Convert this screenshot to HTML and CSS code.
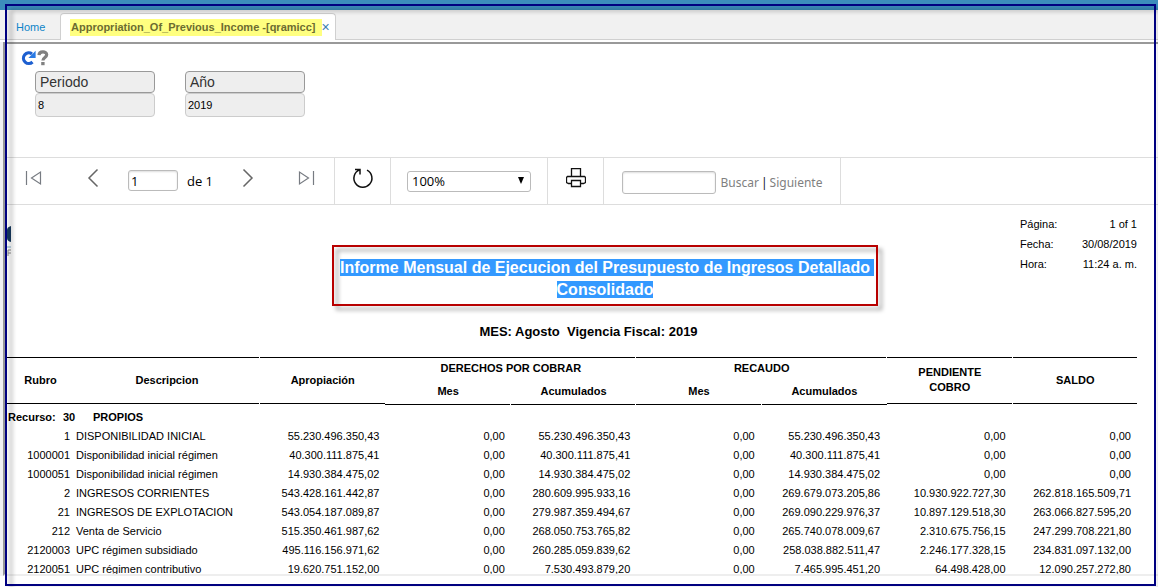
FILE: index.html
```html
<!DOCTYPE html>
<html lang="es">
<head>
<meta charset="utf-8">
<title>Appropriation_Of_Previous_Income</title>
<link rel="stylesheet" href="styles.css">
</head>
<body>
<div class="topbar"></div>
<nav class="tabs">
  <a class="tab" href="#home">Home</a>
  <div class="tab tab-active">
    <a class="tab-title" href="#report">Appropriation_Of_Previous_Income -[qramicc]</a>
    <button class="tab-close" type="button" aria-label="Cerrar">×</button>
  </div>
</nav>
<main class="panel">
  <section class="params">
    <div class="actions">
      <button class="icon-btn" type="button" aria-label="Actualizar">
        <svg width="16" height="16" viewBox="0 0 16 16"><path d="M12 4A5.300 5.300 0 1 0 12.500 12" fill="none" stroke="#1d5fd0" stroke-width="3.200"/><path d="M15.600 .8v7.200H8.400z" fill="#2a7ae4"/></svg>
      </button>
      <button class="icon-btn" type="button" aria-label="Ayuda">
        <svg width="12" height="16" viewBox="0 0 12 16"><path d="M2 5.200C2.200 1 9.700 .9 9.700 4.800c0 2.700-3.800 2.600-3.800 5.700" fill="none" stroke="#808080" stroke-width="3.200"/><path d="M4.200 12h3.400v3.200H4.200z" fill="#808080"/></svg>
      </button>
    </div>
    <div class="fields">
      <div class="field">
        <label for="periodo">Periodo</label>
        <input id="periodo" type="text" value="8" readonly>
      </div>
      <div class="field">
        <label for="anio">Año</label>
        <input id="anio" type="text" value="2019" readonly>
      </div>
    </div>
  </section>

  <div class="toolbar">
    <div class="group group-nav">
      <button class="icon-btn" type="button" aria-label="Primera página">
        <svg width="18" height="18" viewBox="0 0 18 18" fill="none" stroke="#777b82"><path d="M1.500 2v14M15.500 3v12L6.500 9z" stroke-width="1.200"/></svg>
      </button>
      <div class="nav-mid">
        <button class="icon-btn" type="button" aria-label="Página anterior">
          <svg width="12" height="20" viewBox="0 0 12 20" fill="none" stroke="#666"><path d="M10.500 1.500 2 10l8.500 8.500" stroke-width="1.500"/></svg>
        </button>
        <div class="pager">
          <input class="box page-box" type="text" value="1" aria-label="Página actual">
          <span>de 1</span>
        </div>
        <button class="icon-btn" type="button" aria-label="Página siguiente">
          <svg width="12" height="20" viewBox="0 0 12 20" fill="none" stroke="#666"><path d="M1.500 1.500 10 10l-8.500 8.500" stroke-width="1.500"/></svg>
        </button>
      </div>
      <button class="icon-btn" type="button" aria-label="Última página">
        <svg width="18" height="18" viewBox="0 0 18 18" fill="none" stroke="#777b82"><path d="M15.500 2v14M1.500 3v12l9-6z" stroke-width="1.200"/></svg>
      </button>
    </div>
    <div class="group">
      <button class="icon-btn" type="button" aria-label="Recargar">
        <svg width="22" height="22" viewBox="0 0 22 22" fill="none" stroke="#111" stroke-width="1.500"><path d="M15 3.200A9 9 0 1 1 7.500 2.900M3 2.500h5v5"/></svg>
      </button>
    </div>
    <div class="group group-zoom">
      <div class="select">
        <select class="box" aria-label="Zoom"><option>100%</option></select>
        <svg class="caret" width="6" height="7" viewBox="0 0 6 7"><path d="M0 0h6L3 7z"/></svg>
      </div>
    </div>
    <div class="group">
      <button class="icon-btn" type="button" aria-label="Imprimir">
        <svg width="20" height="20" viewBox="0 0 20 20" fill="none" stroke="#111" stroke-width="1.300"><path d="M5.500 8.500v-8h9v8M5.500 15.500h-3l-2-1v-5l1-1h17l1 1v5l-2 1h-3M5.500 12.500h9v6h-9z"/></svg>
      </button>
    </div>
    <div class="group group-find">
      <input class="box find-box" type="text" aria-label="Buscar en el informe">
      <a href="#find">Buscar</a><span class="bar">|</span><a href="#next">Siguiente</a>
    </div>
  </div>

  <article class="report">
    <svg class="logo" width="4" height="30" viewBox="0 0 4 30"><path d="M4 0Q0 1 0 4v8q0 3 4 4z" fill="#16395f"/><path d="M0 21h4" stroke="#7db0cc"/><path d="M1 30v-6h3M1 27h3" fill="none" stroke="#888"/></svg>
    <header class="report-head">
      <h1><span class="hl hl-first">Informe Mensual de Ejecucion del Presupuesto de Ingresos Detallado</span><br><span class="hl">Consolidado</span></h1>
      <dl class="meta">
        <dt>Página:</dt><dd>1 of 1</dd>
        <dt>Fecha:</dt><dd>30/08/2019</dd>
        <dt>Hora:</dt><dd>11:24 a. m.</dd>
      </dl>
    </header>
    <h2>MES: Agosto&nbsp; Vigencia Fiscal: 2019</h2>
    <table>
      <colgroup><col class="c-code"><col class="c-desc"><col><col><col><col><col><col><col></colgroup>
      <thead>
        <tr>
          <th class="line join" rowspan="2">Rubro</th>
          <th class="line" rowspan="2">Descripcion</th>
          <th class="line join" rowspan="2">Apropiación</th>
          <th class="top" colspan="2">DERECHOS POR COBRAR</th>
          <th class="top" colspan="2">RECAUDO</th>
          <th class="line" rowspan="2">PENDIENTE<br>COBRO</th>
          <th class="line" rowspan="2">SALDO</th>
        </tr>
        <tr>
          <th class="bottom">Mes</th>
          <th class="bottom">Acumulados</th>
          <th class="bottom">Mes</th>
          <th class="bottom join">Acumulados</th>
        </tr>
      </thead>
      <tbody>
        <tr class="section"><th colspan="9"><div class="source"><span>Recurso:</span><span>30</span><span>PROPIOS</span></div></th></tr>
        <tr><td>1</td><td>DISPONIBILIDAD INICIAL</td><td>55.230.496.350,43</td><td>0,00</td><td>55.230.496.350,43</td><td>0,00</td><td>55.230.496.350,43</td><td>0,00</td><td>0,00</td></tr>
        <tr><td>1000001</td><td>Disponibilidad inicial régimen</td><td>40.300.111.875,41</td><td>0,00</td><td>40.300.111.875,41</td><td>0,00</td><td>40.300.111.875,41</td><td>0,00</td><td>0,00</td></tr>
        <tr><td>1000051</td><td>Disponibilidad inicial régimen</td><td>14.930.384.475,02</td><td>0,00</td><td>14.930.384.475,02</td><td>0,00</td><td>14.930.384.475,02</td><td>0,00</td><td>0,00</td></tr>
        <tr><td>2</td><td>INGRESOS CORRIENTES</td><td>543.428.161.442,87</td><td>0,00</td><td>280.609.995.933,16</td><td>0,00</td><td>269.679.073.205,86</td><td>10.930.922.727,30</td><td>262.818.165.509,71</td></tr>
        <tr><td>21</td><td>INGRESOS DE EXPLOTACION</td><td>543.054.187.089,87</td><td>0,00</td><td>279.987.359.494,67</td><td>0,00</td><td>269.090.229.976,37</td><td>10.897.129.518,30</td><td>263.066.827.595,20</td></tr>
        <tr><td>212</td><td>Venta de Servicio</td><td>515.350.461.987,62</td><td>0,00</td><td>268.050.753.765,82</td><td>0,00</td><td>265.740.078.009,67</td><td>2.310.675.756,15</td><td>247.299.708.221,80</td></tr>
        <tr><td>2120003</td><td>UPC régimen subsidiado</td><td>495.116.156.971,62</td><td>0,00</td><td>260.285.059.839,62</td><td>0,00</td><td>258.038.882.511,47</td><td>2.246.177.328,15</td><td>234.831.097.132,00</td></tr>
        <tr><td>2120051</td><td>UPC régimen contributivo</td><td>19.620.751.152,00</td><td>0,00</td><td>7.530.493.879,20</td><td>0,00</td><td>7.465.995.451,20</td><td>64.498.428,00</td><td>12.090.257.272,80</td></tr>
      </tbody>
    </table>
  </article>
</main>
<div class="frame"></div>
</body>
</html>
```

FILE: styles.css
```css
* { box-sizing: border-box; }

body {
  margin: 0;
  height: 100vh;
  display: flex;
  flex-direction: column;
  overflow: hidden;
  padding-bottom: 11px;
  background: #fff;
  color: #000;
  font-family: "Liberation Sans", Arial, sans-serif;
  font-size: 11px;
}

a { color: inherit; text-decoration: none; }
input, select, button { font: inherit; color: inherit; }

.topbar { flex: none; height: 10px; background: #3c8dbc; }

/* Tabs */
.tabs {
  flex: none;
  display: flex;
  align-items: flex-end;
  height: 30px;
  background: #f1f1f1;
  border-bottom: 1px solid #d0d0d0;
}
.tab {
  display: flex;
  align-items: center;
  height: 25px;
  padding-left: 16px;
  width: 60px;
  color: #0e84c8;
}
.tab-active {
  width: auto;
  height: 27px;
  margin-bottom: -1px;
  padding: 0 5px 0 9px;
  background: #fff;
  border: 1px solid #d0d0d0;
  border-bottom: 0;
  border-radius: 4px 4px 0 0;
}
.tab-title {
  padding: 0 6px 0 1px;
  line-height: 17px;
  background: #ffff80;
  color: #6c6c30;
  font-weight: bold;
}
.tab-close {
  height: 20px;
  padding: 0;
  border: 0;
  background: none;
  color: #3b7fb0;
  font-size: 14px;
  line-height: 16px;
}

/* Panel */
.panel {
  flex: 1;
  min-height: 0;
  margin: 2px 0 0 3px;
  overflow: hidden;
  border: solid #999;
  border-width: 2px 0 2px 2px;
  border-bottom-color: #eee;
  box-shadow: -3px 0 0 #f1f1f4;
}
.params { padding: 6px 16px 40px 15px; }
.actions { display: flex; gap: 1px; }
.icon-btn { display: flex; padding: 0; border: 0; background: none; }
.fields { display: flex; gap: 30px; padding: 5px 15px 0; }
.field { width: 120px; }
.field label {
  display: block;
  height: 22px;
  padding-left: 4px;
  border: 1px solid #999;
  border-radius: 4px;
  background: #eee;
  color: #333;
  font-size: 14px;
  line-height: 20px;
}
.field input {
  display: block;
  width: 100%;
  height: 24px;
  padding: 0 2px;
  border: 1px solid #ccc;
  border-radius: 4px;
  background: #eee;
}

/* Viewer toolbar */
.toolbar {
  display: flex;
  height: 48px;
  margin-left: 2px;
  border: solid #ddd;
  border-width: 1px 0;
  font-family: "Open Sans", "Noto Sans", sans-serif;
  font-size: 13px;
}
.group {
  display: flex;
  align-items: center;
  justify-content: center;
  width: 56px;
  padding-bottom: 6px;
  border-right: 1px solid #ddd;
}
.group-nav {
  width: 328px;
  justify-content: space-between;
  padding-left: 18px;
  padding-right: 18px;
}
.nav-mid { display: flex; align-items: center; gap: 29px; }
.pager { display: flex; align-items: center; gap: 9px; padding-top: 5px; }
.box {
  height: 21px;
  padding: 0 2px;
  border: 1px solid #bbb;
  border-radius: 3px;
  background: #fff;
}
.page-box { width: 50px; box-shadow: inset 0 1px 2px #ddd; }
.group-zoom { width: 157px; padding-bottom: 0; }
.select { position: relative; width: 124px; }
.select select { width: 100%; padding: 0 4px; line-height: 19px; appearance: none; }
.caret { position: absolute; right: 7px; top: 6px; pointer-events: none; }
.group-find {
  width: 237px;
  padding: 2px 0 0;
  color: #808080;
  font-family: "Noto Sans", "Open Sans", sans-serif;
  font-size: 12px;
}
.find-box { width: 94px; height: 23px; margin-right: 5px; box-shadow: inset 0 1px 2px #ddd; }
.bar { margin: 0 2px; color: #111; }

/* Report */
.report { position: relative; padding: 14px 20px 0 2px; }
.logo { position: absolute; left: 2px; top: 21px; }
.report-head {
  display: grid;
  grid-template-columns: 325fr 546fr 142fr 118fr;
  align-items: start;
}
h1 {
  position: relative;
  grid-column: 2;
  margin: 26px 0 0;
  padding: 12px 0 5px;
  font-size: 16px;
  line-height: 22px;
  text-align: center;
  white-space: nowrap;
}
h1::before {
  content: "";
  position: absolute;
  inset: 0;
  border: 2px solid #b80000;
  filter: drop-shadow(4px 4px 2px rgba(0, 0, 0, .4));
}
.hl { position: relative; background: #3399ff; color: #fff; }
.hl-first { box-shadow: 4px 0 0 #3399ff; }
.meta {
  grid-column: 4;
  display: grid;
  grid-template-columns: auto 1fr;
  margin: -5px 0 0;
  padding-right: 1px;
  line-height: 20px;
}
.meta dd { margin: 0; text-align: right; }
h2 {
  margin: 17px 0 16px;
  padding-left: 32px;
  font-size: 13px;
  line-height: 18px;
  text-align: center;
}

table { width: 100%; table-layout: fixed; border-collapse: collapse; }
.c-code { width: 67px; }
.c-desc { width: 186px; }
th, td { padding: 0; }
thead th {
  --rule: calc(100% - 1px);
  height: 24px;
  padding-bottom: 2px;
  background-image: linear-gradient(#000, #000), linear-gradient(#000, #000);
  background-repeat: no-repeat;
  background-position: 0 0, 0 46px;
  background-size: var(--rule) 1px, var(--rule) 1px;
  line-height: 15px;
}
thead .join { --rule: 100%; }
thead .top { background-size: var(--rule) 1px, 0 0; }
thead .bottom {
  padding-bottom: 4px;
  background-size: 0 0, var(--rule) 1px;
  background-position: 0 0, 0 100%;
}
.section th { height: 21px; padding-top: 2px; text-align: left; }
.source { display: grid; grid-template-columns: 55px 30px 1fr; padding-left: 1px; }
td { height: 19px; padding-right: 6px; text-align: right; white-space: nowrap; }
td:first-child { padding-right: 4px; }
td:nth-child(2) { padding: 0 0 0 2px; text-align: left; }
td:nth-child(n+6) { padding-right: 7px; }

/* Callout frame drawn around the whole window */
.frame {
  position: fixed;
  inset: 4px 2px 1px 5px;
  border: 2px solid #000080;
  filter: drop-shadow(5px 5px 2px rgba(0, 0, 0, .35));
  pointer-events: none;
}
```
